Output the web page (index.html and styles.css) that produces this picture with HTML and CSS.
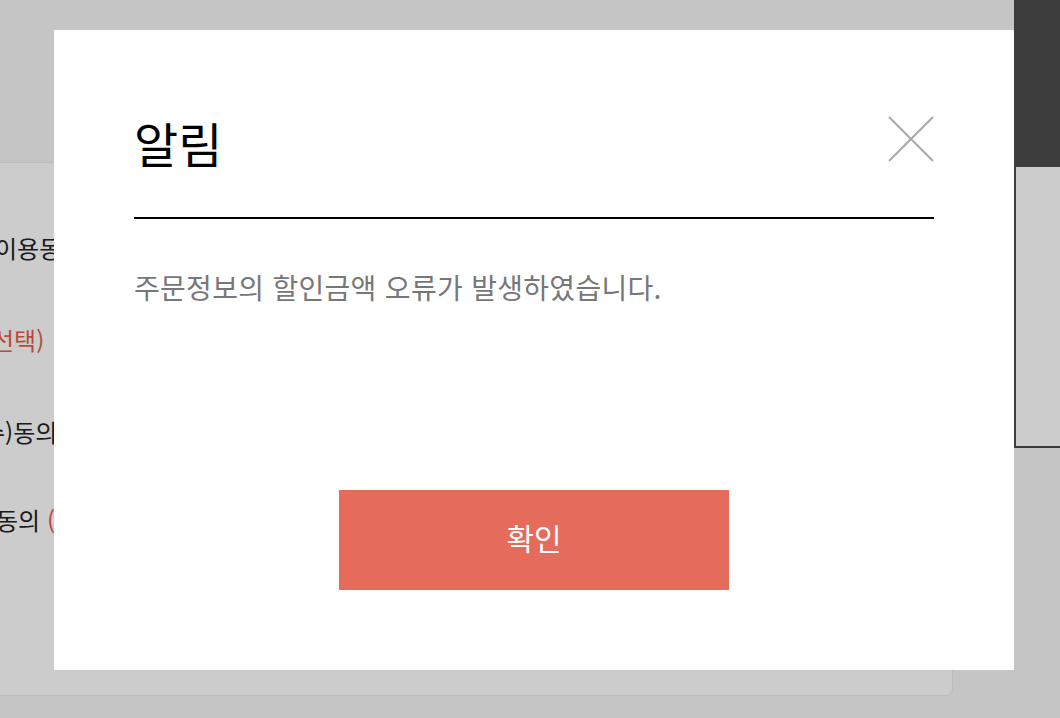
FILE: index.html
```html
<!DOCTYPE html>
<html lang="ko">
<head>
    <meta charset="UTF-8">
    <meta name="viewport" content="width=device-width, initial-scale=1.0">
    <title>알림</title>
    <link rel="stylesheet" href="styles.css">
</head>
<body>
    <div class="page">
        <main class="terms-panel">
            <p class="terms-row row-1">이용동의</p>
            <p class="terms-row row-2"><span class="accent">선택)</span></p>
            <p class="terms-row row-3">수)동의</p>
            <p class="terms-row row-4">동의 <span class="accent">(선택)</span></p>
        </main>
        <aside class="side-box">
            <div class="side-head"></div>
        </aside>
    </div>

    <div class="dim"></div>

    <div class="modal" role="dialog">
        <div class="modal-header">
            <h2 class="modal-title">알림</h2>
            <button class="modal-close" aria-label="닫기">
                <svg width="46" height="46" viewBox="0 0 46 46">
                    <path d="M1 1 L45 45 M45 1 L1 45" stroke="#a9a9a9" stroke-width="2" fill="none"/>
                </svg>
            </button>
        </div>
        <p class="modal-message">주문정보의 할인금액 오류가 발생하였습니다.</p>
        <div class="modal-footer">
            <button class="btn-confirm">확인</button>
        </div>
    </div>
</body>
</html>
```

FILE: styles.css
```css
body {
    margin: 0;
    padding: 0;
    background: #f7f7f7;
    font-family: "Noto Sans CJK KR", "Noto Sans", sans-serif;
    color: #222;
    overflow: hidden;
}

.page {
    display: flex;
    align-items: flex-start;
}

.terms-panel {
    margin: 162px 0 0 -40px;
    width: 993px;
    height: 534px;
    padding-top: 67px;
    box-sizing: border-box;
    background: #fff;
    border: 1px solid #ececec;
    border-radius: 0 0 7px 0;
    flex-shrink: 0;
}

.terms-row {
    margin: 0 0 56px 0;
    font-size: 24px;
    line-height: 36px;
    white-space: nowrap;
}

.row-1 { padding-left: 34px; }
.row-2 { padding-left: 31px; }
.row-3 { padding-left: 22px; }
.row-4 { padding-left: 35px; margin-top: -4px; }

.accent {
    color: #e65c4b;
}

.side-box {
    margin-left: 61px;
    width: 80px;
    height: 448px;
    box-sizing: border-box;
    border-left: 2px solid #4c4c4c;
    border-bottom: 2px solid #4c4c4c;
    background: #fff;
    flex-shrink: 0;
}

.side-head {
    height: 167px;
    background: #4c4c4c;
}

.dim {
    position: fixed;
    top: 0;
    left: 0;
    right: 0;
    bottom: 0;
    background: rgba(0, 0, 0, 0.2);
}

.modal {
    position: fixed;
    top: 30px;
    left: 54px;
    width: 960px;
    height: 640px;
    padding: 0 80px 80px;
    box-sizing: border-box;
    background: #fff;
    display: flex;
    flex-direction: column;
}

.modal-header {
    display: flex;
    justify-content: space-between;
    align-items: center;
    padding: 78px 0 41px;
    border-bottom: 2px solid #000;
}

.modal-title {
    margin: 0;
    font-size: 48px;
    font-weight: normal;
    line-height: 68px;
    color: #000;
}

.modal-close {
    width: 46px;
    height: 46px;
    padding: 0;
    border: none;
    background: none;
    cursor: pointer;
    margin-top: -6px;
}

.modal-close svg {
    display: block;
}

.modal-message {
    margin: 0;
    padding-top: 48px;
    font-size: 28px;
    line-height: 40px;
    letter-spacing: 0.3px;
    color: #777;
}

.modal-footer {
    margin-top: auto;
    display: flex;
    justify-content: center;
}

.btn-confirm {
    width: 390px;
    height: 100px;
    padding: 0 0 6px;
    border: none;
    background: #e56b5b;
    color: #fff;
    font-family: inherit;
    font-size: 30px;
    cursor: pointer;
}
```
